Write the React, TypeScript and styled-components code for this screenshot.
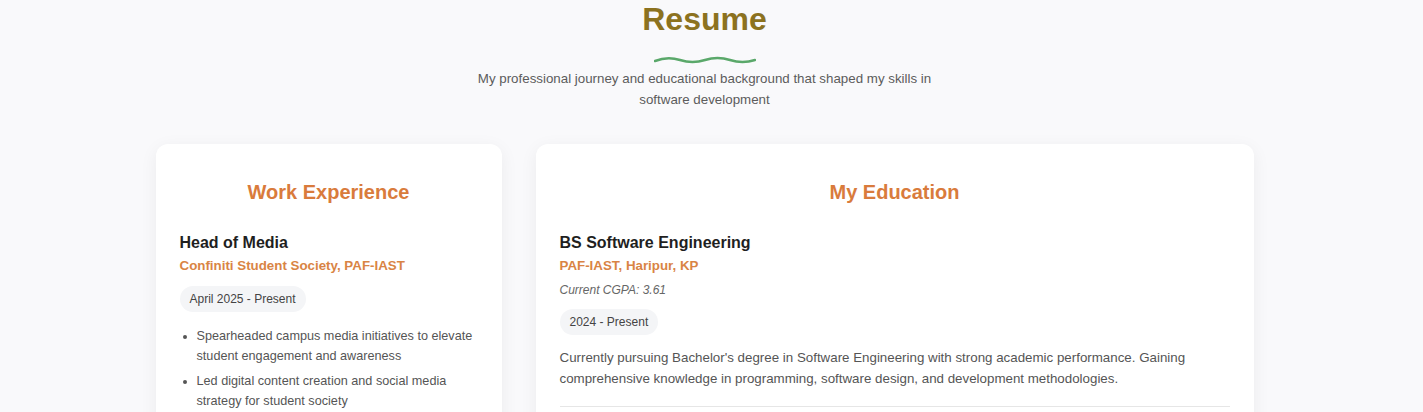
import React from "react";
import styled, { createGlobalStyle } from "styled-components";

const GlobalStyle = createGlobalStyle`
  html, body {
    margin: 0;
    padding: 0;
    background: #f9f9fb;
    font-family: "Liberation Sans", Arial, sans-serif;
  }
  * { box-sizing: border-box; }
`;

const Page = styled.div`
  padding: 0 14px 40px 0;
`;

const Header = styled.header`
  display: flex;
  flex-direction: column;
  align-items: center;
  text-align: center;
`;

const Title = styled.h1`
  margin: 0;
  font-size: 32px;
  line-height: 1.2;
  font-weight: 700;
  color: #8c721f;
`;

const Wave = styled.svg`
  display: block;
  margin: 18px 0 4px;
`;

const Subtitle = styled.p`
  margin: 0;
  max-width: 490px;
  font-size: 13.33px;
  line-height: 21px;
  color: #5c5c5c;
`;

const Grid = styled.div`
  width: 1098px;
  margin: 34px auto 0;
  display: grid;
  grid-template-columns: minmax(0, 346fr) minmax(0, 718fr);
  gap: 34px;
  align-items: start;
`;

const Card = styled.section`
  background: #ffffff;
  border-radius: 12px;
  box-shadow: 0 4px 18px rgba(0, 0, 0, 0.06);
  padding: 36px 24px 24px;
  min-height: 300px;
`;

const CardTitle = styled.h2`
  margin: 0 0 29px;
  text-align: center;
  font-size: 20px;
  line-height: 1.2;
  font-weight: 700;
  color: #d97b3c;
`;

const Item = styled.article<{ $divider?: boolean }>`
  padding-bottom: 17px;
  border-bottom: ${(p) => (p.$divider ? "1px solid #e6e6e6" : "none")};
`;

const ItemTitle = styled.h3`
  margin: 0;
  font-size: 16px;
  line-height: 1.2;
  font-weight: 700;
  color: #1f1f1f;
`;

const Org = styled.div`
  margin-top: 5px;
  margin-bottom: 6px;
  font-size: 13.33px;
  line-height: 16px;
  font-weight: 700;
  color: #d98444;
`;

const Note = styled.div`
  margin: 9px 0 6px;
  font-size: 12px;
  line-height: 1.2;
  font-style: italic;
  color: #666;
`;

const Pill = styled.span`
  display: inline-block;
  margin-top: 6px;
  padding: 4px 10px;
  border-radius: 13px;
  background: #f4f5f7;
  font-size: 12px;
  line-height: 18px;
  color: #444;
`;

const Bullets = styled.ul`
  margin: 14px 0 0;
  padding-left: 17px;
`;

const Bullet = styled.li`
  font-size: 12.67px;
  line-height: 20px;
  color: #555;
  margin-bottom: 5px;
`;

const Para = styled.p`
  margin: 12px 0 0;
  font-size: 13.33px;
  line-height: 21px;
  color: #555;
`;

export default function App() {
  return (
    <>
      <GlobalStyle />
      <Page>
        <Header>
          <Title>Resume</Title>
          <Wave width="102" height="8" viewBox="0 0 102 8" aria-hidden="true">
            <path
              d="M1 5 Q 13.5 0 26 4 T 51 4 T 76 4 T 101 4"
              fill="none"
              stroke="#5aa86a"
              strokeWidth="2.5"
              strokeLinecap="round"
            />
          </Wave>
          <Subtitle>
            My professional journey and educational background that shaped my skills in
            software development
          </Subtitle>
        </Header>
        <Grid>
          <Card>
            <CardTitle>Work Experience</CardTitle>
            <Item>
              <ItemTitle>Head of Media</ItemTitle>
              <Org>Confiniti Student Society, PAF-IAST</Org>
              <Pill>April 2025 - Present</Pill>
              <Bullets>
                <Bullet>Spearheaded campus media initiatives to elevate student engagement and awareness</Bullet>
                <Bullet>Led digital content creation and social media strategy for student society</Bullet>
              </Bullets>
            </Item>
          </Card>
          <Card>
            <CardTitle>My Education</CardTitle>
            <Item $divider>
              <ItemTitle>BS Software Engineering</ItemTitle>
              <Org>PAF-IAST, Haripur, KP</Org>
              <Note>Current CGPA: 3.61</Note>
              <Pill>2024 - Present</Pill>
              <Para>
                Currently pursuing Bachelor's degree in Software Engineering with strong academic
                performance. Gaining comprehensive knowledge in programming, software design, and
                development methodologies.
              </Para>
            </Item>
          </Card>
        </Grid>
      </Page>
    </>
  );
}
